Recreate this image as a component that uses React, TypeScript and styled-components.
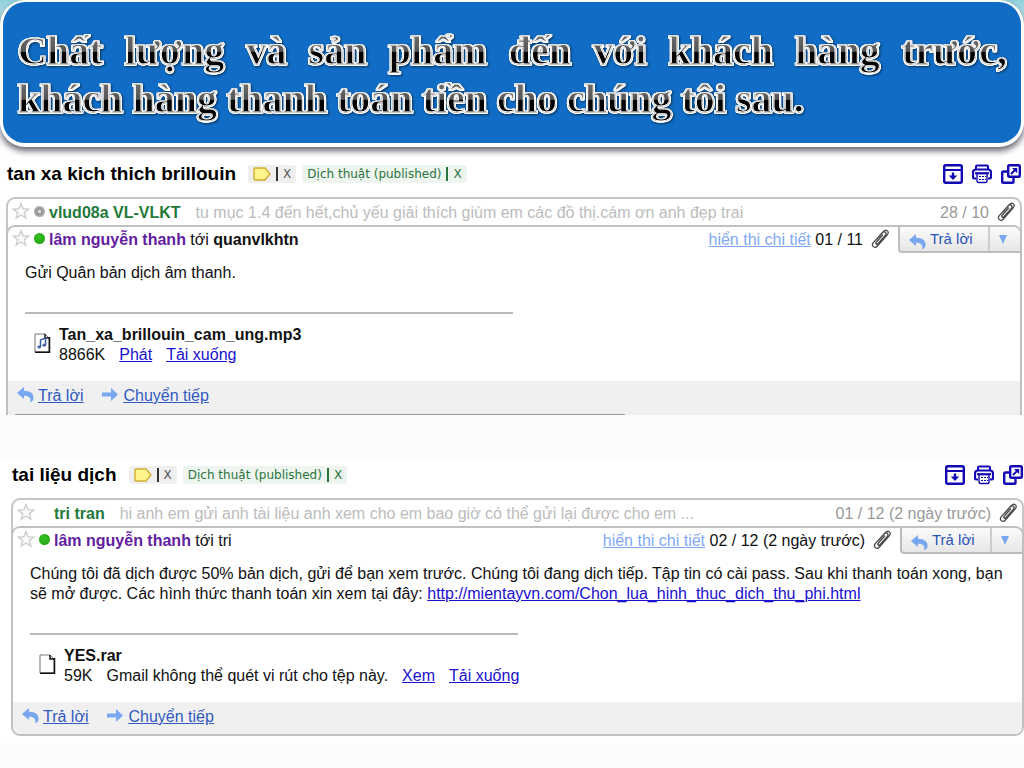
import React from "react";
import styled, { createGlobalStyle } from "styled-components";

const GlobalStyle = createGlobalStyle`
  * { box-sizing: border-box; }
  body {
    margin: 0;
    color: #111;
    font: 16px/20px "Liberation Sans", Arial, sans-serif;
    background: linear-gradient(#8fd0da 0, #c8e8ee 24px, #fcfcfc 60px) no-repeat #fcfcfc;
  }
  button { font: inherit; margin: 0; cursor: pointer; }
`;

const Page = styled.main`
  min-height: 100vh;
  overflow-x: hidden;
`;

const Banner = styled.header`
  position: relative;
  min-height: 147px;
  padding: 25px 14px 19px 15px;
  border: 3px solid #fff;
  border-top-width: 2px;
  border-bottom-width: 4px;
  border-radius: 25px;
  background: #106cc4;
  box-shadow: 0 4px 6px rgba(0, 0, 20, 0.6);
`;

const BannerTitle = styled.h1`
  margin: 0;
  font: bold 40px/48px "Liberation Serif", "Times New Roman", serif;
  text-align: justify;
  filter: drop-shadow(1px 0 0 #fff) drop-shadow(-1px 0 0 #fff) drop-shadow(0 1px 0 #fff)
    drop-shadow(1px 1px 1px rgba(0, 0, 0, 0.5));
`;

const BannerText = styled.span`
  color: transparent;
  background: linear-gradient(#777 0, #555 52%, #000 54%, #000 100%);
  background-clip: text;
  -webkit-background-clip: text;
  box-decoration-break: clone;
  -webkit-box-decoration-break: clone;
  -webkit-text-stroke: 1px #fff;
`;

const Thread = styled.section<{ $second?: boolean }>`
  padding: ${(p) => (p.$second ? "2px 0 7px 11px" : "12px 2px 0 6px")};
  margin-top: ${(p) => (p.$second ? "43px" : "0")};
  background: #fff;
`;

const Subject = styled.div`
  display: flex;
  align-items: center;
  height: 30px;
  margin-bottom: 8px;
  padding: 0 1px;
`;

const SubjectTitle = styled.h2`
  margin: 0 12px 0 0;
  color: #000;
  font-size: 19px;
  line-height: 24px;
  white-space: nowrap;
`;

const Tag = styled.span<{ $green?: boolean }>`
  display: flex;
  align-items: center;
  gap: 5px;
  height: 18px;
  margin-right: 6px;
  padding: 0 5px;
  border-radius: 3px;
  font: 12px/18px "DejaVu Sans", Verdana, sans-serif;
  white-space: nowrap;
  color: ${(p) => (p.$green ? "#2a7440" : "#555")};
  background: ${(p) => (p.$green ? "#eef5ee" : "#efefef")};
`;

const TagClose = styled.button<{ $green?: boolean }>`
  height: 14px;
  padding: 0 0 0 5px;
  border: 0;
  border-left: 2px solid ${(p) => (p.$green ? "#2a7440" : "#333")};
  background: none;
  color: inherit;
  line-height: 14px;
`;

const Tools = styled.div`
  display: flex;
  gap: 9px;
  margin-left: auto;
`;

const ToolButton = styled.button`
  display: flex;
  width: 20px;
  height: 20px;
  padding: 0;
  border: 0;
  background: none;
`;

const Collapsed = styled.div`
  display: flex;
  align-items: flex-start;
  height: 36px;
  margin-bottom: -8px;
  padding: 1px 4px 0 4px;
  border: 2px solid #c6c6c6;
  border-bottom: 0;
  border-radius: 9px 9px 0 0;
`;

const Message = styled.article<{ $closed?: boolean }>`
  border: 2px solid #c0c0c0;
  border-width: ${(p) => (p.$closed ? "2px" : "2px 2px 0")};
  border-radius: ${(p) => (p.$closed ? "9px" : "9px 9px 0 0")};
  background: #fff;
  overflow: hidden;
`;

const MessageHead = styled.div`
  display: flex;
  align-items: flex-start;
  height: 26px;
  padding-left: 4px;
`;

const StarButton = styled.button`
  display: flex;
  width: 18px;
  height: 18px;
  margin-top: 2px;
  padding: 0;
  border: 0;
  background: none;
`;

const Presence = styled.span<{ $state: "busy" | "online" | "none" }>`
  flex: none;
  width: 11px;
  height: 11px;
  margin: 6px 4px 0;
  border-radius: 50%;
  background: ${(p) =>
    p.$state === "online"
      ? "radial-gradient(circle at 45% 40%, #35c020, #1f9e10)"
      : p.$state === "busy"
        ? "radial-gradient(circle, #e4e4e4 0 12%, #939393 30%, #b0b0b0 70%)"
        : "none"};
`;

const Sender = styled.b<{ $color: string }>`
  color: ${(p) => p.$color};
  white-space: nowrap;
`;

const Line = styled.span`
  padding-top: 3px;
  white-space: nowrap;
`;

const Snippet = styled.span`
  flex: 1;
  min-width: 0;
  padding: 3px 0 0 15px;
  overflow: hidden;
  color: #bcbcbc;
  white-space: nowrap;
`;

const Muted = styled(Line)`
  color: #999;
`;

const HeadRight = styled.div`
  display: flex;
  margin-left: auto;
`;

const Details = styled.a`
  color: #7fa9f5;
`;

const ClipBox = styled.span`
  display: flex;
  flex: none;
  width: 20px;
  height: 20px;
  margin: 2px 0 0 7px;
`;

const Split = styled.div`
  display: flex;
  height: 26px;
  margin-left: 8px;
  border: solid #bdbdbd;
  border-width: 0 0 2px 2px;
  border-radius: 0 0 0 4px;
  background: linear-gradient(#fbfbfb, #e6e6e6);
`;

const ReplyButton = styled.button`
  display: flex;
  align-items: flex-start;
  gap: 4px;
  width: 88px;
  padding: 0 0 0 9px;
  border: 0;
  background: none;
  color: #2a55b8;
  font-size: 15px;
  line-height: 24px;
  white-space: nowrap;

  svg {
    margin-top: 6px;
  }
`;

const MoreButton = styled.button`
  display: flex;
  align-items: center;
  justify-content: center;
  width: 32px;
  padding: 0 4px 0 0;
  border: 0;
  border-left: 2px solid #ccc;
  background: none;
`;

const Body = styled.div`
  padding: 10px 8px 0 17px;
`;

const Text = styled.p`
  margin: 0;
`;

const Link = styled.a`
  color: #1a0fd0;
`;

const Divider = styled.hr`
  width: 488px;
  max-width: 100%;
  height: 2px;
  margin: 29px 0 11px;
  border: 0;
  background: #b9b9b9;
`;

const Attachment = styled.div`
  display: flex;
  gap: 8px;
  padding: 0 0 16px 9px;
`;

const FileBox = styled.span`
  display: flex;
  width: 17px;
  height: 20px;
  margin-top: 8px;
`;

const FileMeta = styled.div`
  display: flex;
  gap: 14px;
`;

const Footer = styled.footer<{ $cut?: boolean }>`
  display: flex;
  gap: 18px;
  height: ${(p) => (p.$cut ? "34px" : "32px")};
  padding: 5px 9px 0;
  background: ${(p) =>
    p.$cut
      ? "linear-gradient(#999, #999) 7px 100% / 610px 1px no-repeat #f0f0f0"
      : "#f0f0f0"};
`;

const FooterAction = styled.a`
  display: flex;
  gap: 4px;
  height: 20px;
  color: #3059c0;
`;

const FooterText = styled.span`
  text-decoration: underline;
`;

const blue = "#1208b4";

const ArchiveIcon = () => (
  <svg width="20" height="20" viewBox="0 0 20 20" fill="none" stroke={blue} strokeWidth="2.400">
    <rect x="1.200" y="1.200" width="17.600" height="17.600" rx="1.500" />
    <path d="M1 6h18" strokeWidth="2" />
    <path d="M10 8.500v5" />
    <path d="M5.800 11.500h8.400L10 16z" fill={blue} stroke="none" />
  </svg>
);

const PrintIcon = () => (
  <svg width="20" height="20" viewBox="0 0 20 20" fill="none" stroke={blue} strokeWidth="2">
    <path d="M4 5.500V2.500q0-1 1-1h10q1 0 1 1v3" />
    <path d="M4 14.500H2.500Q1 14.500 1 13V8.500q0-3 3-3h12q3 0 3 3V13q0 1.500-1.500 1.500H16" strokeWidth="2.200" />
    <path d="M5 9.500h10V17q0 1.500-1.500 1.500h-7Q5 18.500 5 17z" fill="#fff" strokeWidth="1.400" />
    <path d="M3 9.200h14" />
    <path d="M7 12.500h2m1 0h2m1 0h1M7 15.500h2m1 0h2m1 0h1" strokeWidth="1" />
  </svg>
);

const PopoutIcon = () => (
  <svg width="20" height="20" viewBox="0 0 20 20" fill="none" stroke={blue} strokeWidth="2.400">
    <path d="M6 7.500H2.500q-1.300 0-1.300 1.300v8.700q0 1.300 1.300 1.300h8.700q1.300 0 1.300-1.300V14" />
    <rect x="7.200" y="1.200" width="11.600" height="11.600" rx="1.300" />
    <path d="M10 10l4-4" strokeWidth="2" />
    <path d="M11 4h5.200v5.200z" fill={blue} stroke="none" />
  </svg>
);

const StarIcon = () => (
  <svg width="18" height="18" viewBox="0 0 18 18">
    <path
      d="M9 1.500l2 5.300 5.700.3-4.400 3.500 1.600 5.600L9 13l-4.900 3.200 1.600-5.600L1.300 7.100 7 6.800z"
      fill="#fafafa"
      stroke="#cfcfcf"
      strokeWidth="1.400"
    />
  </svg>
);

const ClipIcon = () => (
  <svg width="20" height="20" viewBox="0 0 20 20" fill="none" strokeLinecap="round" stroke="#4a4a4a" strokeWidth="1.300">
    <path d="M12.600 6L6.200 13.300c-1.100 1.300.6 2.700 1.700 1.500l7.400-8.400c2-2.400-1-4.900-3.100-2.600L3.300 13.600c-2.500 3.100 1.300 6.500 4.100 3.400l9.800-11.100c2.700-3.300-1-6.300-3.700-3.400L7 9.700" />
  </svg>
);

const LabelIcon = () => (
  <svg width="18" height="14" viewBox="0 0 18 14">
    <path d="M2 1h10l5 6-5 6H2q-1 0-1-1V2q0-1 1-1z" fill="#fff58a" stroke="#d3ad33" strokeWidth="1.400" />
  </svg>
);

const ReplyIcon = () => (
  <svg width="17" height="18" viewBox="0 0 17 18">
    <path d="M0 7l7-6v3.800c6.500 0 10 3 9.500 7.700-.2 2-1.600 3.300-3.500 3.500 1.300-3.800-.8-6.200-6-6.200V13z" fill="#78a7f0" />
  </svg>
);

const ForwardIcon = () => (
  <svg width="18" height="18" viewBox="0 0 18 18">
    <path d="M1 6.500h9V2l7 6.500-7 6.500v-4.500H1z" fill="#78a7f0" />
  </svg>
);

const DownIcon = () => (
  <svg width="8" height="9" viewBox="0 0 8 9">
    <path d="M0 0h8L4 9z" fill="#78a7f0" />
  </svg>
);

const FileIcon = ({ music }: { music?: boolean }) => (
  <svg width="17" height="20" viewBox="0 0 17 20">
    <path d="M1 1h10l4 4v14H1z" fill="#fff" stroke="#777" />
    <path d="M11 1v4h4M15.500 4v15.200H1" fill="none" stroke="#111" strokeWidth="1.500" />
    {music && (
      <g fill="#3b5ea5" stroke="#3b5ea5">
        <path d="M6.500 14V7l5-2v7" fill="none" strokeWidth="1.500" />
        <ellipse cx="5.200" cy="14" rx="1.500" ry="1" />
        <ellipse cx="10.200" cy="12.200" rx="1.500" ry="1" />
      </g>
    )}
  </svg>
);

function SubjectBar({ title }: { title: string }) {
  return (
    <Subject>
      <SubjectTitle>{title}</SubjectTitle>
      <Tag>
        <LabelIcon />
        <TagClose aria-label="Remove label">X</TagClose>
      </Tag>
      <Tag $green>
        Dịch thuật (published)
        <TagClose $green aria-label="Remove Dịch thuật">X</TagClose>
      </Tag>
      <Tools>
        <ToolButton aria-label="Archive"><ArchiveIcon /></ToolButton>
        <ToolButton aria-label="Print"><PrintIcon /></ToolButton>
        <ToolButton aria-label="Open in new window"><PopoutIcon /></ToolButton>
      </Tools>
    </Subject>
  );
}

interface RowProps {
  sender: string;
  snippet: string;
  date: string;
  state: "busy" | "none";
}

function CollapsedRow({ sender, snippet, date, state }: RowProps) {
  return (
    <Collapsed>
      <StarButton aria-label="Star"><StarIcon /></StarButton>
      <Presence $state={state} />
      <Line><Sender $color="#1f7a3a">{sender}</Sender></Line>
      <Snippet>{snippet}</Snippet>
      <Muted>{date}</Muted>
      <ClipBox><ClipIcon /></ClipBox>
    </Collapsed>
  );
}

function OpenHead({ to, date }: { to: React.ReactNode; date: string }) {
  return (
    <MessageHead>
      <StarButton aria-label="Star"><StarIcon /></StarButton>
      <Presence $state="online" />
      <Line><Sender $color="#6320a0">lâm nguyễn thanh</Sender> tới {to}</Line>
      <HeadRight>
        <Line><Details href="#details">hiển thi chi tiết</Details> {date}</Line>
        <ClipBox><ClipIcon /></ClipBox>
        <Split>
          <ReplyButton><ReplyIcon />Trả lời</ReplyButton>
          <MoreButton aria-label="More"><DownIcon /></MoreButton>
        </Split>
      </HeadRight>
    </MessageHead>
  );
}

function Actions({ cut }: { cut?: boolean }) {
  return (
    <Footer $cut={cut}>
      <FooterAction href="#reply"><ReplyIcon /><FooterText>Trả lời</FooterText></FooterAction>
      <FooterAction href="#forward"><ForwardIcon /><FooterText>Chuyển tiếp</FooterText></FooterAction>
    </Footer>
  );
}

export default function App() {
  return (
    <Page>
      <GlobalStyle />
      <Banner>
        <BannerTitle>
          <BannerText>
            Chất lượng và sản phẩm đến với khách hàng trước, khách hàng thanh toán tiền cho chúng tôi sau.
          </BannerText>
        </BannerTitle>
      </Banner>

      <Thread>
        <SubjectBar title="tan xa kich thich brillouin" />
        <CollapsedRow
          sender="vlud08a VL-VLKT"
          snippet="tu mục 1.4 đến hết,chủ yếu giải thích giùm em các đồ thị.cám ơn anh đẹp trai"
          date="28 / 10"
          state="busy"
        />
        <Message>
          <OpenHead to={<b>quanvlkhtn</b>} date="01 / 11" />
          <Body>
            <Text>Gửi Quân bản dịch âm thanh.</Text>
            <Divider />
            <Attachment>
              <FileBox><FileIcon music /></FileBox>
              <div>
                <b>Tan_xa_brillouin_cam_ung.mp3</b>
                <FileMeta>
                  <span>8866K</span>
                  <Link href="#play">Phát</Link>
                  <Link href="#download">Tải xuống</Link>
                </FileMeta>
              </div>
            </Attachment>
          </Body>
          <Actions cut />
        </Message>
      </Thread>

      <Thread $second>
        <SubjectBar title="tai liệu dịch" />
        <CollapsedRow
          sender="tri tran"
          snippet="hi anh em gửi anh tài liệu anh xem cho em bao giờ có thể gửi lại được cho em ..."
          date="01 / 12 (2 ngày trước)"
          state="none"
        />
        <Message $closed>
          <OpenHead to="tri" date="02 / 12 (2 ngày trước)" />
          <Body>
            <Text>
              Chúng tôi đã dịch được 50% bản dịch, gửi để bạn xem trước. Chúng tôi đang dịch tiếp. Tập tin có cài
              pass. Sau khi thanh toán xong, bạn sẽ mở được. Các hình thức thanh toán xin xem tại đây:{" "}
              <Link href="http://mientayvn.com/Chon_lua_hinh_thuc_dich_thu_phi.html">
                http://mientayvn.com/Chon_lua_hinh_thuc_dich_thu_phi.html
              </Link>
            </Text>
            <Divider />
            <Attachment>
              <FileBox><FileIcon /></FileBox>
              <div>
                <b>YES.rar</b>
                <FileMeta>
                  <span>59K</span>
                  <span>Gmail không thể quét vi rút cho tệp này.</span>
                  <Link href="#view">Xem</Link>
                  <Link href="#download">Tải xuống</Link>
                </FileMeta>
              </div>
            </Attachment>
          </Body>
          <Actions />
        </Message>
      </Thread>
    </Page>
  );
}
